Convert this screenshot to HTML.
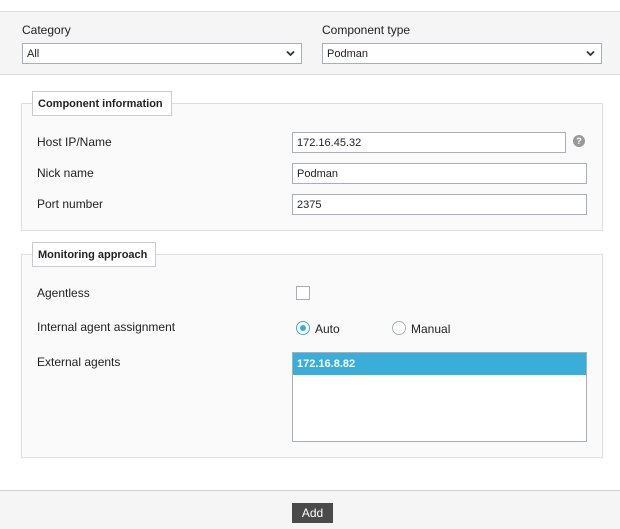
<!DOCTYPE html>
<html><head><meta charset="utf-8"><style>
*{box-sizing:border-box;margin:0;padding:0}
body{width:620px;height:529px;background:#fff;font-family:"Liberation Sans",sans-serif;font-size:12px;color:#222;position:relative;overflow:hidden}
.abs{position:absolute}
.band{left:0;top:11px;width:620px;height:64px;background:#f5f5f5;border-top:1px solid #dcdcdc;border-bottom:1px solid #dcdcdc}
.lbl{font-size:12px;color:#222;white-space:nowrap}
.sel,.inp{height:21px;border:1px solid #a9afb8;background:#fff;font-size:11px;padding-left:4px;display:flex;align-items:center;white-space:nowrap}
.sel svg{position:absolute;right:6px;top:6px}
.fs{border:1px solid #dedede;background:#fafafa}
.leg{background:#fff;border:1px solid #c8ccd2;font-weight:bold;font-size:11px;padding-left:5px;white-space:nowrap;display:flex;align-items:center}
</style></head><body>
<div class="abs band"></div>
<div class="abs lbl" style="left:22px;top:23px">Category</div>
<div class="abs lbl" style="left:322px;top:23px">Component type</div>
<div class="abs sel" style="left:22px;top:43px;width:280px">All<svg width="9" height="7" viewBox="0 0 9 7"><path d="M1 1.5L4.5 5L8 1.5" stroke="#333" stroke-width="1.8" fill="none"/></svg></div>
<div class="abs sel" style="left:322px;top:43px;width:280px">Podman<svg width="9" height="7" viewBox="0 0 9 7"><path d="M1 1.5L4.5 5L8 1.5" stroke="#333" stroke-width="1.8" fill="none"/></svg></div>

<div class="abs fs" style="left:21px;top:103px;width:582px;height:128px"></div>
<div class="abs leg" style="left:32px;top:91px;width:140px;height:25px">Component information</div>
<div class="abs lbl" style="left:37px;top:135px">Host IP/Name</div>
<div class="abs lbl" style="left:37px;top:166px">Nick name</div>
<div class="abs lbl" style="left:37px;top:197px">Port number</div>
<div class="abs inp" style="left:292px;top:132px;width:274px">172.16.45.32</div>
<div class="abs" style="left:573px;top:135px;width:12px;height:12px;border-radius:50%;background:#999;color:#fff;font-size:9px;font-weight:bold;text-align:center;line-height:12px">?</div>
<div class="abs inp" style="left:292px;top:163px;width:295px">Podman</div>
<div class="abs inp" style="left:292px;top:194px;width:295px">2375</div>

<div class="abs fs" style="left:21px;top:254px;width:582px;height:204px"></div>
<div class="abs leg" style="left:32px;top:242px;width:124px;height:25px">Monitoring approach</div>
<div class="abs lbl" style="left:37px;top:286px">Agentless</div>
<div class="abs lbl" style="left:37px;top:320px">Internal agent assignment</div>
<div class="abs lbl" style="left:37px;top:355px">External agents</div>
<div class="abs" style="left:296px;top:286px;width:14px;height:14px;border:1px solid #a9afb8;background:#fff"></div>
<div class="abs" style="left:296px;top:321px;width:14px;height:14px;border:1px solid #3badd9;border-radius:50%;background:#fff"><div style="margin:3px;width:6px;height:6px;border-radius:50%;background:#3badd9"></div></div>
<div class="abs lbl" style="left:315px;top:322px">Auto</div>
<div class="abs" style="left:392px;top:321px;width:14px;height:14px;border:1px solid #a9afb8;border-radius:50%;background:#fff"></div>
<div class="abs lbl" style="left:411px;top:322px">Manual</div>
<div class="abs" style="left:292px;top:352px;width:295px;height:90px;border:1px solid #a9afb8;background:#fff"><div style="background:#3badd9;color:#fff;font-weight:bold;height:22px;line-height:22px;padding-left:4px;font-size:11px">172.16.8.82</div></div>

<div class="abs" style="left:0;top:490px;width:620px;height:39px;background:#f5f5f5;border-top:1px solid #d0d0d0"></div>
<div class="abs" style="left:292px;top:503px;width:41px;height:20px;background:#4a4a4a;color:#fff;font-size:12px;text-align:center;line-height:20px">Add</div>
</body></html>
